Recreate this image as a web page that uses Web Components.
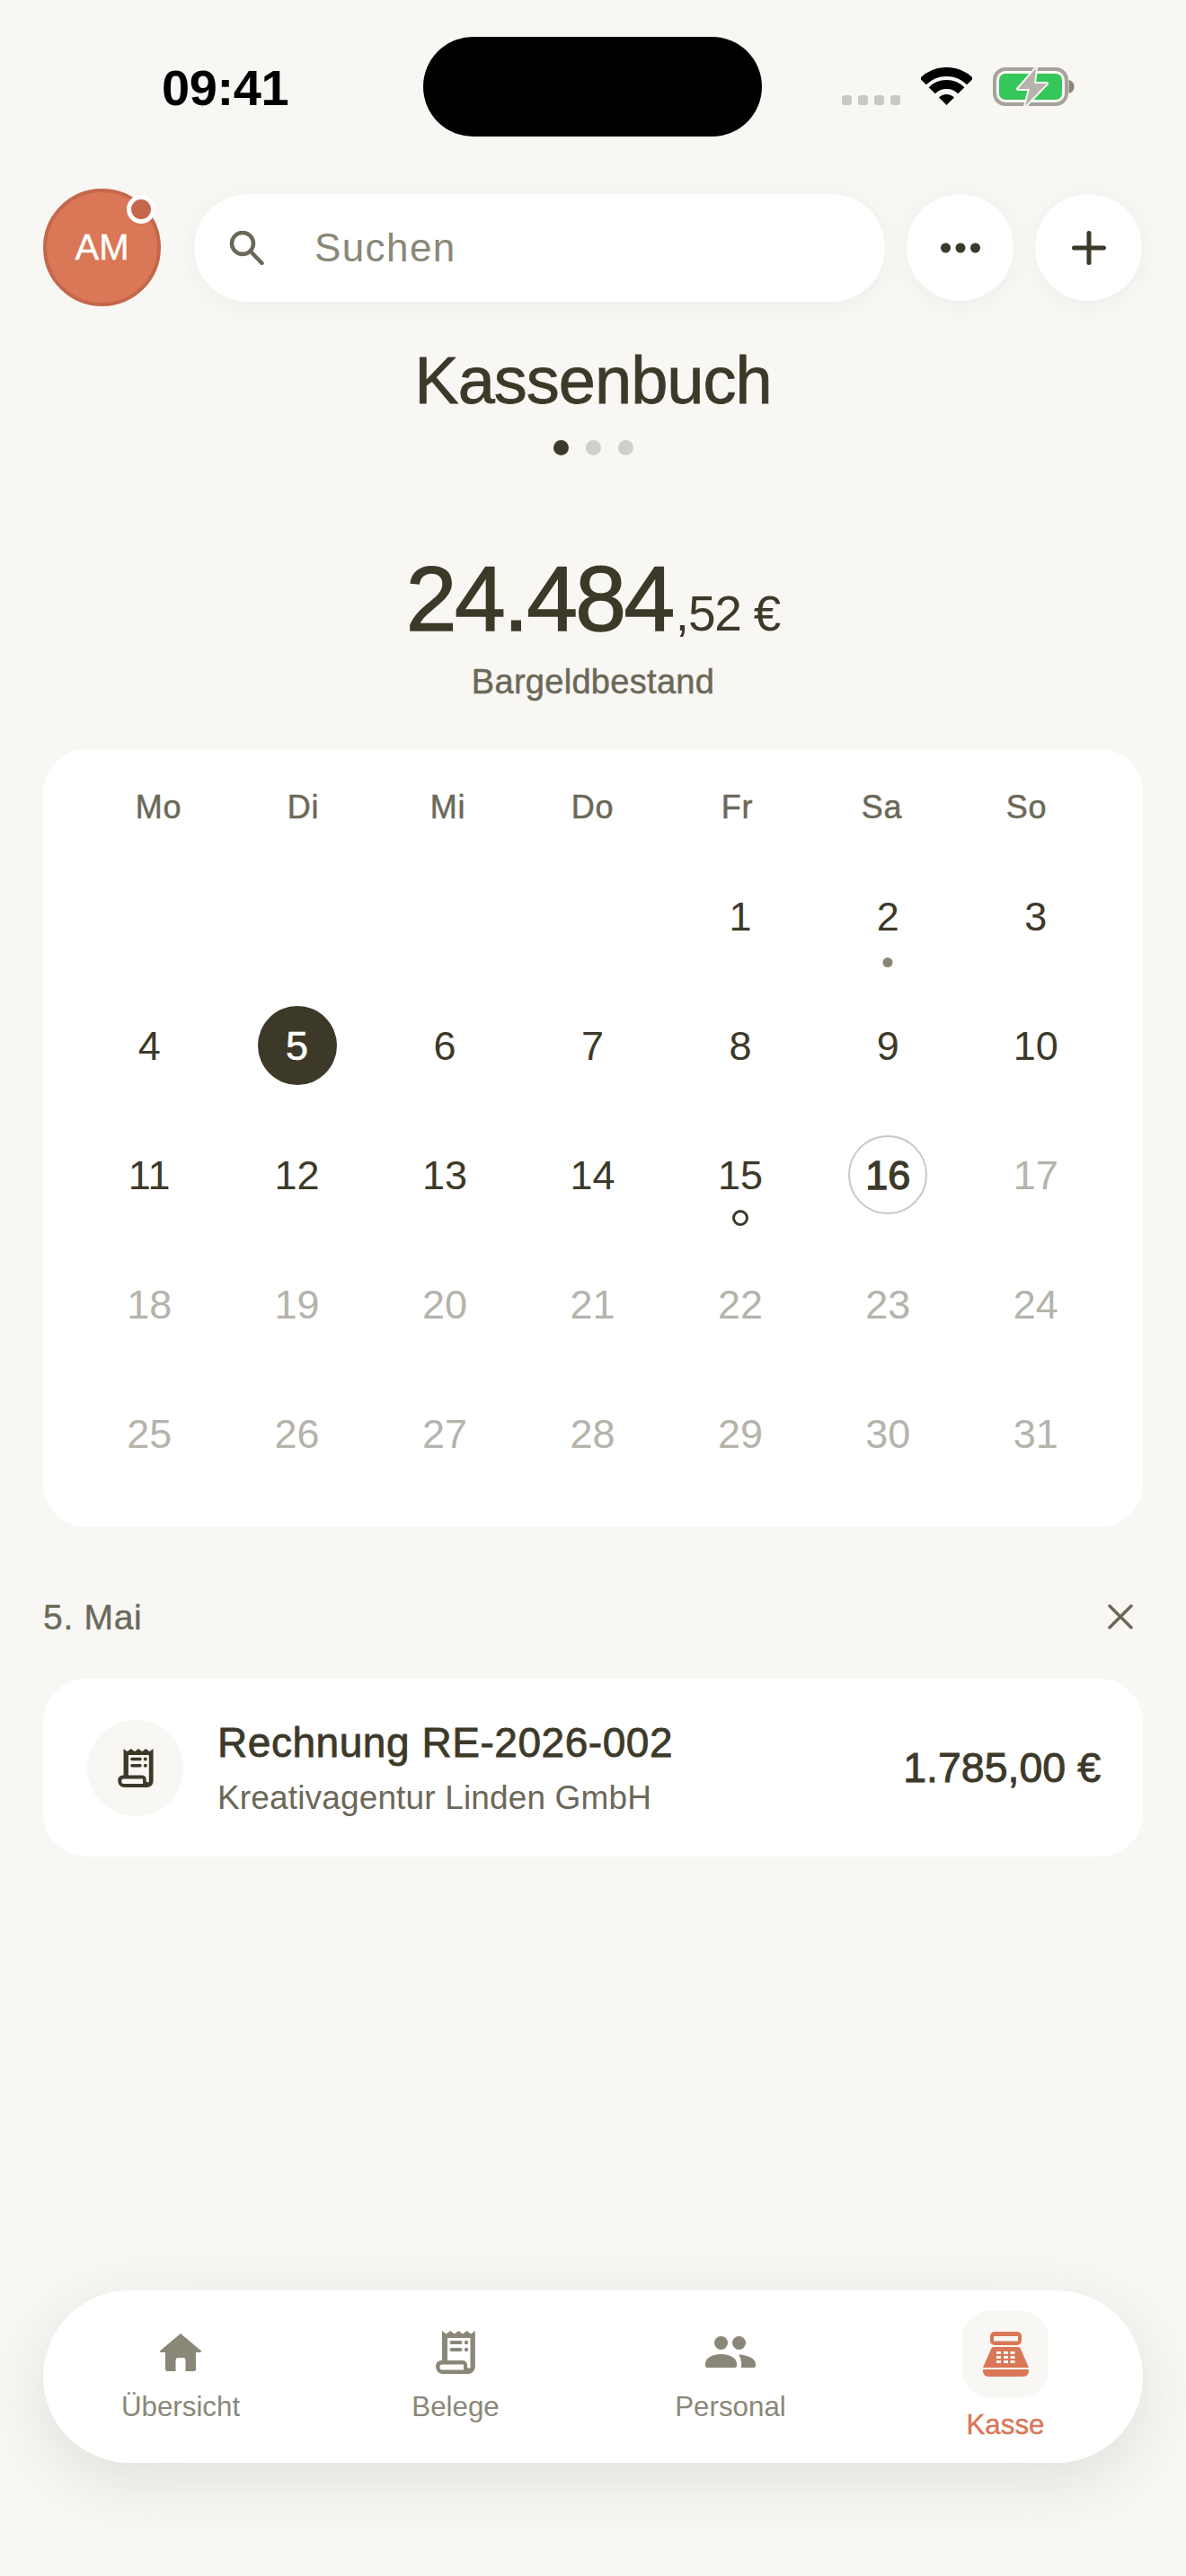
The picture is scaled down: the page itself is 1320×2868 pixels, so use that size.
<!DOCTYPE html>
<html lang="de">
<head>
<meta charset="utf-8">
<title>Kassenbuch</title>
<style>
  html, body { margin: 0; padding: 0; background: #f8f7f4; }
  body { font-family: "Liberation Sans", Arial, sans-serif; color: #3d3929; }
</style>
</head>
<body>

<kasse-app>
  <status-bar></status-bar>
  <top-bar></top-bar>
  <page-title dots="3" active="0">Kassenbuch</page-title>
  <cash-balance euros="24.484" cents=",52 €">Bargeldbestand</cash-balance>
  <month-calendar></month-calendar>
  <day-header>5. Mai</day-header>
  <tx-card amount="1.785,00 €" title="Rechnung RE-2026-002" subtitle="Kreativagentur Linden GmbH"></tx-card>
  <bottom-nav>
    <nav-item label="Übersicht">
      <svg width="46" height="42" viewBox="0 0 46 42" fill="#8a8778"><path d="M23 0 45.500 19a1.100 1.100 0 0 1-.7 2H40V39.500a2.500 2.500 0 0 1-2.500 2.500H28.500V30a3 3 0 0 0-3-3h-5a3 3 0 0 0-3 3V42H8.500A2.500 2.500 0 0 1 6 39.500V21H1.200a1.100 1.100 0 0 1-.7-2z"/></svg>
    </nav-item>
    <nav-item label="Belege">
      <svg width="44" height="49" viewBox="0 0 44 49" fill="#8a8778"><path fill-rule="evenodd" d="M7 1l4.600 3.500 4.600-3.500 4.600 3.500 4.600-3.500 4.600 3.500 4.600-3.500 4.600 3.500 4.600-3.500V41a8 8 0 0 1-8 8H8a8 8 0 0 1-8-8v-1a6 6 0 0 1 6-6h1zM13 9V34H30a5 5 0 0 1 5 5v2a2 2 0 0 0 3.500 1V9zM7 38.500a2.500 2.500 0 0 0-2.500 2.500v1a2.500 2.500 0 0 0 2.500 2.500H31v-6z"/><rect x="15.500" y="12" width="14" height="4" rx="2"/><rect x="15.500" y="20" width="14" height="4" rx="2"/><circle cx="34" cy="14" r="2.200"/><circle cx="34" cy="22" r="2.200"/></svg>
    </nav-item>
    <nav-item label="Personal">
      <svg width="56" height="35" viewBox="0 0 56 35" fill="#8a8778"><ellipse cx="17.500" cy="7.500" rx="7.500" ry="7.500"/><ellipse cx="37.500" cy="7.500" rx="7.500" ry="7.500"/><path d="M0 31c0-7 8-11 17.500-11S35 24 35 31v2a2 2 0 0 1-2 2H2a2 2 0 0 1-2-2z"/><path d="M37 20.500C48 21 56 25 56 31v2a2 2 0 0 1-2 2H40V31c0-4-1-7.500-3-10.500z"/></svg>
    </nav-item>
    <nav-item label="Kasse" active>
      <svg width="51" height="50" viewBox="0 0 51 50" fill="#d97757"><path fill-rule="evenodd" d="M13 0H38a5 5 0 0 1 5 5v5a5 5 0 0 1-5 5H13a5 5 0 0 1-5-5V5a5 5 0 0 1 5-5zM12 5v5.500H39V5z"/><path fill-rule="evenodd" d="M12 17H39a3 3 0 0 1 3 2.200L51 40H0L9 19.200A3 3 0 0 1 12 17zM15 22v3h5v-3zM23 22v3h5v-3zM30.500 22v3h5v-3zM15 27v3h5v-3zM23 27v3h5v-3zM30.500 27v3h5v-3zM15 32v3h5v-3zM23 32v3h5v-3zM30.500 32v3h5v-3z"/><path d="M0 42H51V44a6 6 0 0 1-6 6H6a6 6 0 0 1-6-6z"/></svg>
    </nav-item>
  </bottom-nav>
</kasse-app>

<script>
// small helper so every component looks the same
function shadow(el, html) {
  el.attachShadow({ mode: "open" }).innerHTML = html;
}

class KasseApp extends HTMLElement {
  constructor() {
    super();
    shadow(this, `
      <style>
        :host { display: flex; flex-direction: column; height: 2868px; box-sizing: border-box; background: #f8f7f4; color: #3d3929; font-family: "Liberation Sans", Arial, sans-serif; }
      </style>
      <slot></slot>
    `);
  }
}

class StatusBar extends HTMLElement {
  constructor() {
    super();
    shadow(this, `
      <style>
        :host { display: block; padding-top: 41px; }
        .bar { display: grid; grid-template-columns: 471px 377px 1fr; height: 111px; }
        .time { font-size: 56px; font-weight: 700; color: #000; line-height: 54px; padding: 30px 0 0 180px; letter-spacing: -.4px; }
        .island { background: #000; border-radius: 56px; }
        .right { display: flex; align-items: flex-start; padding: 34px 0 0 89px; }
        .signal { display: flex; gap: 7px; margin-top: 31px; }
        .signal i { width: 11px; height: 11px; border-radius: 3px; background: #c9c8c1; }
        .wifi { margin-left: 23px; }
        .battery { margin-left: 23px; }
      </style>
      <div class="bar">
        <div class="time">09:41</div>
        <div class="island"></div>
        <div class="right">
          <div class="signal"><i></i><i></i><i></i><i></i></div>
          <svg class="wifi" width="57" height="42" viewBox="0 0 57 42" fill="none" stroke="#000" stroke-width="10">
            <path d="M2.300 15.800A37 37 0 0 1 54.700 15.800"/>
            <path d="M12.200 25.700A23 23 0 0 1 44.800 25.700"/>
            <path d="M28.500 42 20 33.500A12 12 0 0 1 37 33.500Z" fill="#000" stroke="none"/>
          </svg>
          <svg class="battery" width="93" height="44" viewBox="0 0 93 44" fill="none">
            <rect x="2" y="2" width="80" height="39" rx="12" stroke="#a5a39a" stroke-width="4"/>
            <rect x="7" y="7" width="70" height="29" rx="7" fill="#34c759"/>
            <path d="M84.500 14c4 1 6 4 6 7.500s-2 6.500-6 7.500z" fill="#8a8778"/>
            <path d="M48 1 28 24H41L36 43 60 18H46z" fill="#b5b3ab" stroke="#f8f7f4" stroke-width="4" stroke-linejoin="round" paint-order="stroke"/>
          </svg>
        </div>
      </div>
    `);
  }
}

class TopBar extends HTMLElement {
  constructor() {
    super();
    shadow(this, `
      <style>
        :host { display: flex; align-items: center; margin-top: 58px; padding: 0 49px 0 48px; }
        .avatar { position: relative; width: 131px; height: 131px; box-sizing: border-box; flex: none; border-radius: 50%; background: #d97757; border: 4px solid #c4674a; color: #fff; font-size: 40px; -webkit-text-stroke: .4px currentColor; display: flex; align-items: center; justify-content: center; }
        .badge { position: absolute; top: 3px; right: 2px; width: 32px; height: 32px; box-sizing: border-box; border-radius: 50%; background: #c4674a; border: 5px solid #fff; }
        .search { flex: 1; height: 120px; margin-left: 37px; border-radius: 60px; background: #fff; box-shadow: 0 4px 24px rgba(61,57,41,.05); display: flex; align-items: center; padding-left: 39px; }
        .search span { font-size: 44px; color: #8a8778; margin-left: 55px; letter-spacing: 1.400px; }
        .btn { width: 119px; height: 119px; margin-left: 24px; flex: none; border-radius: 50%; background: #fff; box-shadow: 0 4px 24px rgba(61,57,41,.05); display: flex; align-items: center; justify-content: center; }
      </style>
      <div class="avatar">AM<div class="badge"></div></div>
      <div class="search">
        <svg width="40" height="38" viewBox="0 0 40 38" fill="none" stroke="#6b6858" stroke-width="4.500" stroke-linecap="round"><circle cx="15" cy="14" r="12"/><path d="M24 23 36.500 36"/></svg>
        <span>Suchen</span>
      </div>
      <div class="btn">
        <svg width="44" height="12" viewBox="0 0 44 12" fill="#3d3929"><circle cx="5.500" cy="6" r="5.500"/><circle cx="22" cy="6" r="5.500"/><circle cx="38.500" cy="6" r="5.500"/></svg>
      </div>
      <div class="btn">
        <svg width="38" height="38" viewBox="0 0 38 38" stroke="#3d3929" stroke-width="5" stroke-linecap="round"><path d="M19 2.500V35.500M2.500 19H35.500"/></svg>
      </div>
    `);
  }
}

class PageTitle extends HTMLElement {
  constructor() {
    super();
    const n = +this.getAttribute("dots") || 0;
    const active = +this.getAttribute("active") || 0;
    let dots = "";
    for (let i = 0; i < n; i++) dots += `<i class="${i === active ? "on" : ""}"></i>`;
    shadow(this, `
      <style>
        :host { display: block; margin-top: 39px; text-align: center; }
        h1 { margin: 0; font-size: 74px; line-height: 88px; font-weight: 400; letter-spacing: -1px; -webkit-text-stroke: .8px currentColor; }
        .dots { display: flex; justify-content: center; gap: 19px; margin-top: 22px; }
        .dots i { width: 17px; height: 17px; border-radius: 50%; background: #d0cfc8; }
        .dots i.on { background: #3d3929; }
      </style>
      <h1><slot></slot></h1>
      <div class="dots">${dots}</div>
    `);
  }
}

class CashBalance extends HTMLElement {
  constructor() {
    super();
    shadow(this, `
      <style>
        :host { display: block; margin-top: 105px; text-align: center; }
        .sum { line-height: 110px; height: 110px; white-space: nowrap; }
        .eur { font-size: 102px; letter-spacing: -2.500px; -webkit-text-stroke: 1.400px currentColor; }
        .ct { font-size: 55px; letter-spacing: -1.200px; margin-left: 3px; }
        .lbl { font-size: 38px; line-height: 46px; margin-top: 14px; color: #6b6858; letter-spacing: .3px; -webkit-text-stroke: .5px currentColor; }
      </style>
      <div class="sum"><span class="eur">${this.getAttribute("euros")}</span><span class="ct">${this.getAttribute("cents")}</span></div>
      <div class="lbl"><slot></slot></div>
    `);
  }
}

class MonthCalendar extends HTMLElement {
  constructor() {
    super();
    const head = ["Mo", "Di", "Mi", "Do", "Fr", "Sa", "So"].map(d => `<span>${d}</span>`).join("");
    // May 2026: starts on a Friday, 16 is today, only days up to 16 are active
    let cells = "<b></b><b></b><b></b><b></b>";
    for (let d = 1; d <= 31; d++) {
      let cls = d > 16 ? "off" : "";
      if (d === 5) cls = "sel";
      if (d === 16) cls = "today";
      let mark = "";
      if (d === 2) mark = '<em class="dot"></em>';
      if (d === 15) mark = '<em class="ring"></em>';
      cells += `<div class="day"><span class="${cls}">${d}</span>${mark}</div>`;
    }
    shadow(this, `
      <style>
        :host { display: block; margin: 52px 48px 0; padding: 41px 37px 32px 36px; background: #fff; border-radius: 48px; }
        .head { display: grid; grid-template-columns: repeat(7, 161px); justify-content: center; height: 48px; margin-bottom: 25px; }
        .head span { font-size: 36px; line-height: 48px; text-align: center; color: #6b6858; letter-spacing: .8px; -webkit-text-stroke: .5px currentColor; }
        .days { display: grid; grid-template-columns: repeat(7, 1fr); grid-auto-rows: 144px; }
        .day { position: relative; display: flex; align-items: center; justify-content: center; }
        .day span { width: 88px; height: 88px; box-sizing: border-box; border-radius: 50%; display: flex; align-items: center; justify-content: center; font-size: 45px; padding-top: 1px; }
        .off { color: #b5b3ab; }
        .sel { background: #3d3929; color: #fff; -webkit-text-stroke: .6px currentColor; }
        .today { border: 2px solid #c9c8c1; -webkit-text-stroke: 1.300px currentColor; }
        .dot, .ring { position: absolute; left: 50%; border-radius: 50%; transform: translateX(-50%); }
        .dot { top: 118px; width: 11px; height: 11px; background: #8a8778; }
        .ring { top: 111px; width: 18px; height: 18px; box-sizing: border-box; border: 3.500px solid #3d3929; }
      </style>
      <div class="head">${head}</div>
      <div class="days">${cells}</div>
    `);
  }
}

class DayHeader extends HTMLElement {
  constructor() {
    super();
    shadow(this, `
      <style>
        :host { display: flex; align-items: center; justify-content: space-between; height: 46px; margin: 78px 48px 0; color: #6b6858; font-size: 39px; letter-spacing: .7px; -webkit-text-stroke: .4px currentColor; }
        svg { margin-right: 11px; margin-top: -3px; }
      </style>
      <span><slot></slot></span>
      <svg width="28" height="28" viewBox="0 0 28 28" stroke="#6b6858" stroke-width="3.500" stroke-linecap="round"><path d="M2 2 26 26M26 2 2 26"/></svg>
    `);
  }
}

class TxCard extends HTMLElement {
  constructor() {
    super();
    shadow(this, `
      <style>
        :host { display: flex; align-items: center; height: 198px; margin: 45px 48px 0; padding: 0 47px 0 49px; background: #fff; border-radius: 48px; }
        .ic { width: 107px; height: 107px; flex: none; border-radius: 50%; background: #f8f7f4; display: flex; align-items: center; justify-content: center; }
        .txt { flex: 1; margin-left: 38px; }
        .t { font-size: 46px; line-height: 54px; letter-spacing: .55px; -webkit-text-stroke: .8px currentColor; }
        .s { font-size: 37px; line-height: 44px; margin-top: 13px; color: #6b6858; letter-spacing: .15px; }
        .a { font-size: 46.500px; -webkit-text-stroke: .9px currentColor; white-space: nowrap; }
      </style>
      <div class="ic">
        <svg width="40" height="44" viewBox="0 0 44 49" fill="#3d3929"><path fill-rule="evenodd" d="M7 1l4.600 3.500 4.600-3.500 4.600 3.500 4.600-3.500 4.600 3.500 4.600-3.500 4.600 3.500 4.600-3.500V41a8 8 0 0 1-8 8H8a8 8 0 0 1-8-8v-1a6 6 0 0 1 6-6h1zM13 9V34H30a5 5 0 0 1 5 5v2a2 2 0 0 0 3.500 1V9zM7 38.500a2.500 2.500 0 0 0-2.500 2.500v1a2.500 2.500 0 0 0 2.500 2.500H31v-6z"/><rect x="15.500" y="12" width="14" height="4" rx="2"/><rect x="15.500" y="20" width="14" height="4" rx="2"/><circle cx="34" cy="14" r="2.200"/><circle cx="34" cy="22" r="2.200"/></svg>
      </div>
      <div class="txt">
        <div class="t">${this.getAttribute("title")}</div>
        <div class="s">${this.getAttribute("subtitle")}</div>
      </div>
      <div class="a">${this.getAttribute("amount")}</div>
    `);
  }
}

class BottomNav extends HTMLElement {
  constructor() {
    super();
    shadow(this, `
      <style>
        :host { display: grid; grid-template-columns: repeat(4, 1fr); align-items: center; height: 192px; margin: auto 48px 126px 48px; background: #fff; border-radius: 96px; box-shadow: 0 20px 70px rgba(61,57,41,.12); }
      </style>
      <slot></slot>
    `);
  }
}

class NavItem extends HTMLElement {
  constructor() {
    super();
    shadow(this, `
      <style>
        :host { display: flex; flex-direction: column; align-items: center; color: #8a8778; font-size: 31.300px; }
        .icon { height: 50px; display: flex; align-items: center; justify-content: center; margin-bottom: 17px; }
        .lbl { line-height: 38px; }
        :host([active]) { color: #d97757; }
        :host([active]) .icon { width: 96px; height: 96px; border-radius: 30px; background: #f8f7f4; margin-bottom: 12px; }
        :host([active]) .lbl { -webkit-text-stroke: .4px currentColor; }
      </style>
      <div class="icon"><slot></slot></div>
      <div class="lbl">${this.getAttribute("label")}</div>
    `);
  }
}

customElements.define("kasse-app", KasseApp);
customElements.define("status-bar", StatusBar);
customElements.define("top-bar", TopBar);
customElements.define("page-title", PageTitle);
customElements.define("cash-balance", CashBalance);
customElements.define("month-calendar", MonthCalendar);
customElements.define("day-header", DayHeader);
customElements.define("tx-card", TxCard);
customElements.define("bottom-nav", BottomNav);
customElements.define("nav-item", NavItem);
</script>
</body>
</html>
